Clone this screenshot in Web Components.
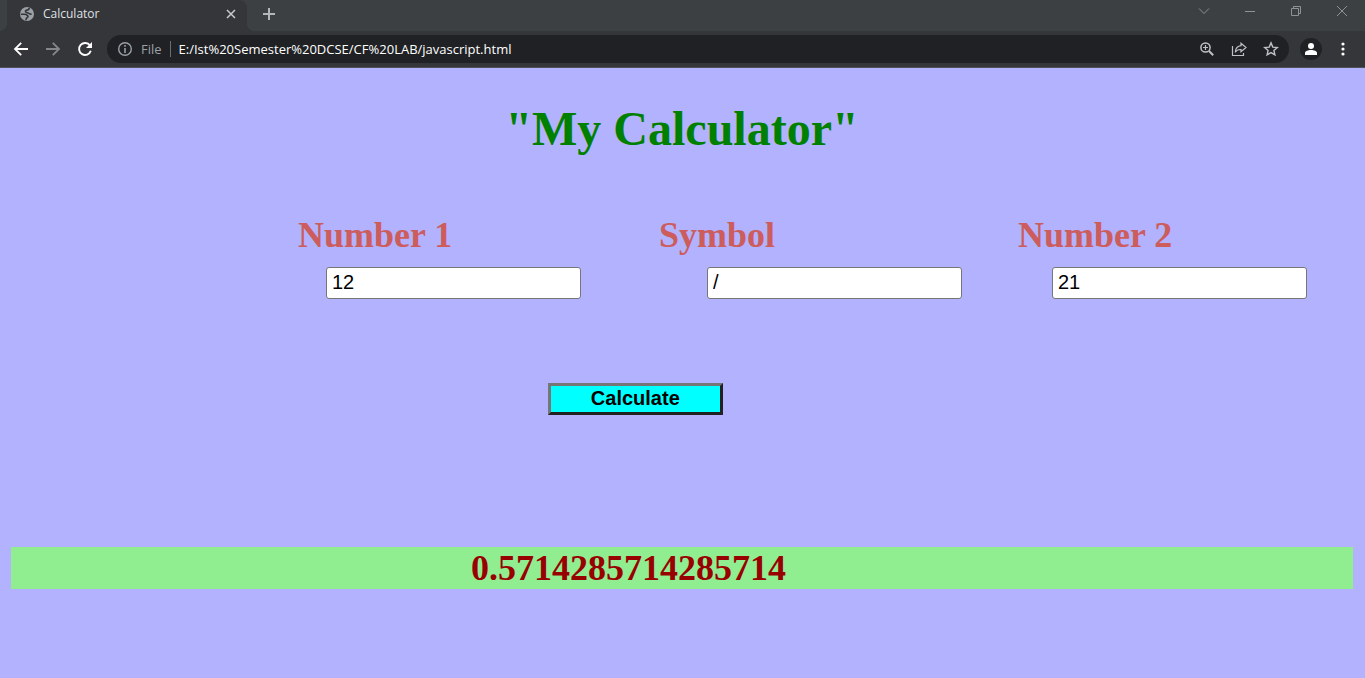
<!DOCTYPE html>
<html lang="en">
<head>
<meta charset="utf-8">
<title>Calculator</title>
<style>
html, body { margin: 0; min-height: 100vh; background: #b2b2ff; }
</style>
</head>
<body>
<browser-tabs>Calculator</browser-tabs>
<browser-toolbar scheme="File" address="E:/Ist%20Semester%20DCSE/CF%20LAB/javascript.html"></browser-toolbar>
<calculator-page></calculator-page>
<script>
const make = (name, html, setup) => {
  const template = document.createElement('template');
  template.innerHTML = html;
  customElements.define(name, class extends HTMLElement {
    constructor() {
      super();
      this.attachShadow({ mode: 'open' }).append(template.content.cloneNode(true));
    }
    connectedCallback() { if (setup) setup(this, this.shadowRoot); }
  });
};

const buttonReset = `
  * { box-sizing: border-box; }
  button { border: 0; padding: 0; margin: 0; background: none; color: inherit; display: flex; align-items: center; justify-content: center; flex: none; }
  svg { display: block; flex: none; }`;

make('browser-tabs', `
<style>${buttonReset}
  :host { display: flex; height: 31px; background: #3c4043; color: #dfe1e5; font: 12px/16px "Open Sans", "Noto Sans", sans-serif; }
  .tab { position: relative; display: flex; align-items: center; width: 240px; height: 31px; margin-left: 7px; padding: 0 8px 3px 12px; background: #35363a; border-radius: 0 8px 0 0; }
  .tab::before, .tab::after { content: ""; position: absolute; bottom: 0; width: 8px; height: 8px; }
  .tab::before { right: 100%; background: radial-gradient(circle at 0 0, transparent 8px, #35363a 8px); }
  .tab::after { left: 100%; background: radial-gradient(circle at 100% 0, transparent 8px, #35363a 8px); }
  .title { flex: 1; margin-left: 8px; }
  .close { width: 16px; height: 16px; }
  .new { width: 28px; height: 28px; margin-left: 8px; color: #b4b7ba; }
  .window { display: flex; margin-left: auto; color: #909294; }
  .window button { width: 46px; height: 22px; }
</style>
<div class="tab">
  <svg width="16" height="16" viewBox="0 0 16 16"><circle cx="8" cy="8" r="7" fill="#9aa0a6"/><path d="M1.800 8.300h3.400c1.700 0 2.600.6 3.400 1.300.8.8.3 1.700-.6 2.200-.9.400-1 .9-1 2.400M10.200 1.800c0 1.600-.6 2.200-2 2.300-1.400.1-1.900.7-1.700 1.500.3 1.100 1.800.9 2.900 1.500 1 .6 1.500 1.200 3.200 1" fill="none" stroke="#35363a" stroke-width="1.600"/></svg>
  <span class="title"><slot></slot></span>
  <button class="close" aria-label="Close tab"><svg width="10" height="10" viewBox="0 0 10 10"><path d="M1 1l8 8M9 1l-8 8" stroke="#c8cace" stroke-width="1.500"/></svg></button>
</div>
<button class="new" aria-label="New tab"><svg width="12" height="12" viewBox="0 0 12 12"><path d="M6 0v12M0 6h12" stroke="currentColor" stroke-width="2"/></svg></button>
<div class="window">
  <button aria-label="Search tabs"><svg width="12" height="12" viewBox="0 0 12 12"><path d="M1 3.500l5 5 5-5" fill="none" stroke="currentColor"/></svg></button>
  <button aria-label="Minimize"><svg width="10" height="10" viewBox="0 0 10 10"><path d="M0 5.500h10" stroke="currentColor"/></svg></button>
  <button aria-label="Restore"><svg width="10" height="10" viewBox="0 0 10 10"><path d="M.5 2.500h7v7h-7zM2.500 2.500v-2h7v7h-2" fill="none" stroke="currentColor"/></svg></button>
  <button aria-label="Close"><svg width="10" height="10" viewBox="0 0 10 10"><path d="M0 0l10 10M10 0L0 10" stroke="currentColor"/></svg></button>
</div>`);

make('browser-toolbar', `
<style>${buttonReset}
  :host { display: flex; align-items: center; box-sizing: border-box; height: 37px; padding: 0 6px 0 5px; background: #35363a; border-bottom: 1px solid #505155; color: #fff; font: 13px/18px "Open Sans", "Noto Sans", sans-serif; }
  button { width: 32px; height: 28px; }
  .box { flex: 1; display: flex; align-items: center; height: 28px; margin-left: 6px; padding: 0 2px 0 10px; border-radius: 14px; background: #202124; color: #bdc1c6; }
  label { margin: 0 8px; color: #9aa0a6; }
  .rule { width: 1px; height: 16px; background: #6b6e72; }
  input { flex: 1; min-width: 0; height: 20px; margin-left: 8px; padding: 0; border: 0; outline: 0; background: none; color: #fff; font: inherit; }
  .avatar { width: 22px; height: 22px; margin: 0 5px 0 11px; border-radius: 50%; background: #202124; }
</style>
<button aria-label="Back"><svg width="16" height="16" viewBox="0 0 16 16"><path d="M15 8H2M8.200 1.800L2 8l6.200 6.200" fill="none" stroke="#fff" stroke-width="1.800"/></svg></button>
<button aria-label="Forward"><svg width="16" height="16" viewBox="0 0 16 16"><path d="M1 8h13M7.800 1.800L14 8l-6.200 6.200" fill="none" stroke="#85868a" stroke-width="1.800"/></svg></button>
<button aria-label="Reload"><svg width="16" height="16" viewBox="0 0 16 16"><path d="M13 4.500A6 6 0 1 0 13.800 9.800" fill="none" stroke="#fff" stroke-width="1.900"/><path d="M15 1v6H9z" fill="#fff"/></svg></button>
<div class="box">
  <svg width="16" height="16" viewBox="0 0 16 16"><circle cx="8" cy="8" r="6.300" fill="none" stroke="#9aa0a6" stroke-width="1.400"/><path d="M8 7v5M8 4v1.800" stroke="#9aa0a6" stroke-width="1.600"/></svg>
  <label for="address"></label><span class="rule"></span>
  <input id="address" type="text" spellcheck="false">
  <button aria-label="Zoom"><svg width="16" height="16" viewBox="0 0 16 16"><circle cx="6.500" cy="6.500" r="4.600" fill="none" stroke="currentColor" stroke-width="1.500"/><path d="M10 10l4.200 4.200" stroke="currentColor" stroke-width="2"/><path d="M6.500 4v5M4 6.500h5" stroke="currentColor" stroke-width="1.200"/></svg></button>
  <button aria-label="Share"><svg width="16" height="16" viewBox="0 0 16 16" fill="none" stroke="currentColor" stroke-width="1.200"><path d="M1.500 5v9.500h11V12"/><path d="M10 2.200l5 4.300-5 4.300V8.500C7.500 8.400 5.500 9.200 4.200 11.200 4.600 7.500 6.500 5 10 4.600z"/></svg></button>
  <button aria-label="Bookmark"><svg width="16" height="16" viewBox="0 0 16 16"><path d="M8 1.900l1.800 4.200 4.500.4-3.400 3 1 4.400L8 11.600l-3.900 2.300 1-4.400-3.400-3 4.500-.4z" fill="none" stroke="currentColor" stroke-width="1.400"/></svg></button>
</div>
<button class="avatar" aria-label="Profile"><svg width="14" height="14" viewBox="0 0 14 14" fill="#fff"><circle cx="7" cy="4" r="3"/><path d="M1 13v-2c0-2 3-3 6-3s6 1 6 3v2z"/></svg></button>
<button aria-label="Menu"><svg width="4" height="14" viewBox="0 0 4 14" fill="#fff"><circle cx="2" cy="2" r="1.600"/><circle cx="2" cy="7" r="1.600"/><circle cx="2" cy="12" r="1.600"/></svg></button>`,
(host, root) => {
  root.querySelector('label').textContent = host.getAttribute('scheme');
  root.querySelector('input').value = host.getAttribute('address');
});

make('number-field', `
<style>
  :host { display: block; }
  label { display: block; color: #cd5c5c; font: bold 36px/42px "Liberation Serif", "Times New Roman", serif; }
  input { box-sizing: border-box; display: block; width: 255px; height: 32px; margin: 11px 0 0 var(--indent, 0); padding: 0 5px 2px; border: 1px solid #767676; border-radius: 3px; background: #fff; color: #000; font: 20px/24px "Liberation Sans", Arial, sans-serif; }
</style>
<label for="value"><slot></slot></label>
<input id="value" type="text">`,
(host, root) => { root.querySelector('input').value = host.getAttribute('value'); });

make('calculator-page', `
<style>
  :host { display: block; padding: 33px 12px 48px 11px; font-family: "Liberation Serif", "Times New Roman", serif; }
  h1 { margin: 0; text-align: center; color: #008000; font-size: 48px; line-height: 56px; }
  .fields { display: grid; grid-template-columns: 361fr 359fr 335fr; margin-top: 57px; padding-left: 287px; }
  .first { --indent: 28px; }
  .second { --indent: 48px; }
  .third { --indent: 34px; }
  button { display: block; width: 175px; height: 32px; margin: 84px 0 0 40%; padding: 0 0 2px; border: 3px outset #767676; background: #0ff; color: #000; font: bold 20px/24px "Liberation Sans", Arial, sans-serif; }
  h2 { margin: 132px 0 0; padding-left: 460px; background: #90ee90; color: #990000; font-size: 36px; line-height: 42px; min-height: 42px; }
</style>
<h1>"My Calculator"</h1>
<div class="fields">
  <number-field class="first" value="12">Number 1</number-field>
  <number-field class="second" value="/">Symbol</number-field>
  <number-field class="third" value="21">Number 2</number-field>
</div>
<button type="button">Calculate</button>
<h2>0.5714285714285714</h2>`,
(host, root) => {
  root.querySelector('button').onclick = () => {
    const [a, op, b] = [...root.querySelectorAll('number-field')].map(f => f.shadowRoot.querySelector('input').value.trim());
    const run = { '+': (x, y) => x + y, '-': (x, y) => x - y, '*': (x, y) => x * y, '/': (x, y) => x / y }[op];
    root.querySelector('h2').textContent = run ? run(+a, +b) : 'Invalid symbol';
  };
});
</script>
</body>
</html>
